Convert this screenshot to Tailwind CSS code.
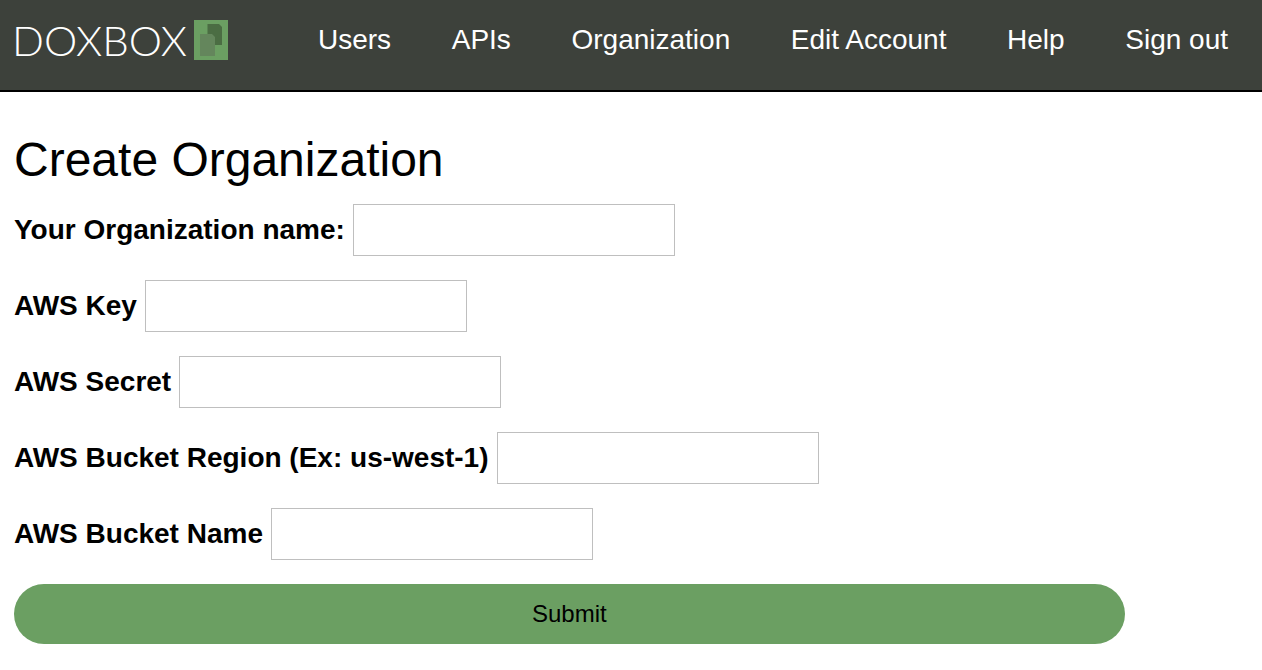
<!DOCTYPE html>
<html lang="en">
<head>
<meta charset="utf-8">
<meta name="viewport" content="width=device-width, initial-scale=1">
<title>DOXBOX - Create Organization</title>
<script src="https://cdn.jsdelivr.net/npm/@tailwindcss/browser@4"></script>
</head>
<body class="bg-white text-black font-['Helvetica_Neue','Liberation_Sans',Arial,sans-serif]">
<header class="flex items-start border-b-2 border-black bg-[#3d413b] pt-5 pb-[30px] pl-3 pr-[34px] text-white">
  <a href="#" aria-label="DOXBOX home" class="flex h-10 w-[216px] shrink-0 items-center justify-between">
    <span class="font-['Lato',sans-serif] text-[42px] leading-10 font-light">DOXBOX</span>
    <svg class="h-10 w-[34px] shrink-0" viewBox="0 0 34 40" aria-hidden="true">
      <rect width="34" height="40" fill="#6b9f62"/>
      <path d="M13.5 4H25l3 3v18H13.5z" fill="#4b6d43"/>
      <path d="M6 14h12l3 3v19H6z" fill="#64865c"/>
    </svg>
  </a>
  <nav class="ml-[90px] flex flex-1 justify-between gap-4 text-[28px] leading-10 whitespace-nowrap">
    <a href="#">Users</a>
    <a href="#">APIs</a>
    <a href="#">Organization</a>
    <a href="#">Edit Account</a>
    <a href="#">Help</a>
    <a href="#">Sign out</a>
  </nav>
</header>
<main class="px-3.5 pt-10 pb-6">
  <h1 class="text-[48px] leading-14 mb-4">Create Organization</h1>
  <form class="flex flex-col gap-6 text-[28px]">
    <div class="flex items-center gap-2">
      <label for="org" class="font-bold">Your Organization name:</label>
      <input id="org" type="text" class="h-[52px] w-[322px] border border-[#bfbfbf] px-3 text-2xl">
    </div>
    <div class="flex items-center gap-2">
      <label for="key" class="font-bold">AWS Key</label>
      <input id="key" type="text" class="h-[52px] w-[322px] border border-[#bfbfbf] px-3 text-2xl">
    </div>
    <div class="flex items-center gap-2">
      <label for="secret" class="font-bold">AWS Secret</label>
      <input id="secret" type="text" class="h-[52px] w-[322px] border border-[#bfbfbf] px-3 text-2xl">
    </div>
    <div class="flex items-center gap-2">
      <label for="region" class="font-bold">AWS Bucket Region (Ex: us-west-1)</label>
      <input id="region" type="text" class="h-[52px] w-[322px] border border-[#bfbfbf] px-3 text-2xl">
    </div>
    <div class="flex items-center gap-2">
      <label for="bucket" class="font-bold">AWS Bucket Name</label>
      <input id="bucket" type="text" class="h-[52px] w-[322px] border border-[#bfbfbf] px-3 text-2xl">
    </div>
    <button type="submit" class="h-15 w-9/10 rounded-full bg-[#6b9f62] text-2xl">Submit</button>
  </form>
</main>
</body>
</html>
